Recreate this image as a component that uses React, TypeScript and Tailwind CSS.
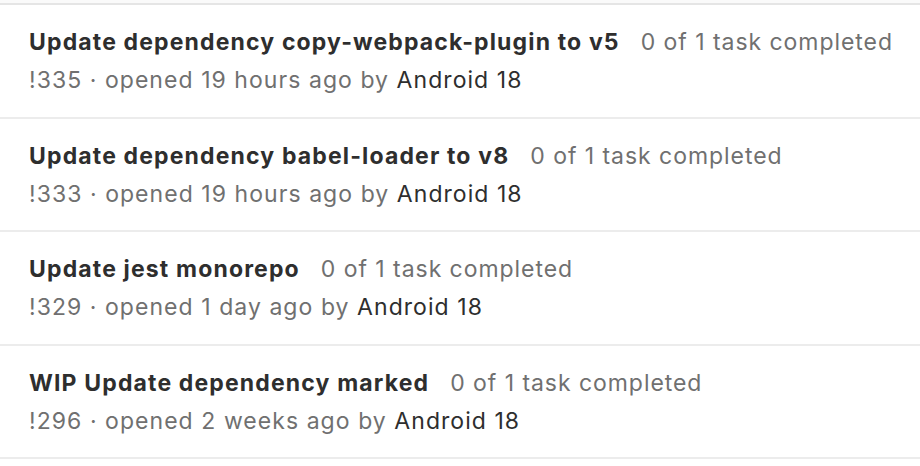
const items = [
  { title: 'Update dependency copy-webpack-plugin to v5', iid: '!335', when: '19 hours ago' },
  { title: 'Update dependency babel-loader to v8', iid: '!333', when: '19 hours ago' },
  { title: 'Update jest monorepo', iid: '!329', when: '1 day ago' },
  { title: 'WIP Update dependency marked', iid: '!296', when: '2 weeks ago' },
];

export default function App() {
  return (
    <div className="w-[920px] h-[466px] overflow-hidden bg-white font-['Inter',sans-serif]">
      <div className="h-[3px] bg-[#fafafa] border-b-2 border-[#e5e5e5] box-content" />
      <ul>
        {items.map((item) => (
          <li
            key={item.iid}
            className="h-[113.5px] border-b-2 border-[#ececec] pl-[29px] pt-[23px]"
          >
            <div className="flex items-baseline text-[23px] leading-[28px]">
              <span className="font-bold tracking-[1.15px] text-[#2e2e2e]">{item.title}</span>
              <span className="ml-[21px] tracking-[0.95px] text-[#707070]">0 of 1 task completed</span>
            </div>
            <div className="mt-[10px] text-[23px] leading-[28px] tracking-[1.05px] text-[#707070]">
              {item.iid} · opened {item.when} by{' '}
              <span className="text-[#2e2e2e]">Android 18</span>
            </div>
          </li>
        ))}
      </ul>
    </div>
  );
}
